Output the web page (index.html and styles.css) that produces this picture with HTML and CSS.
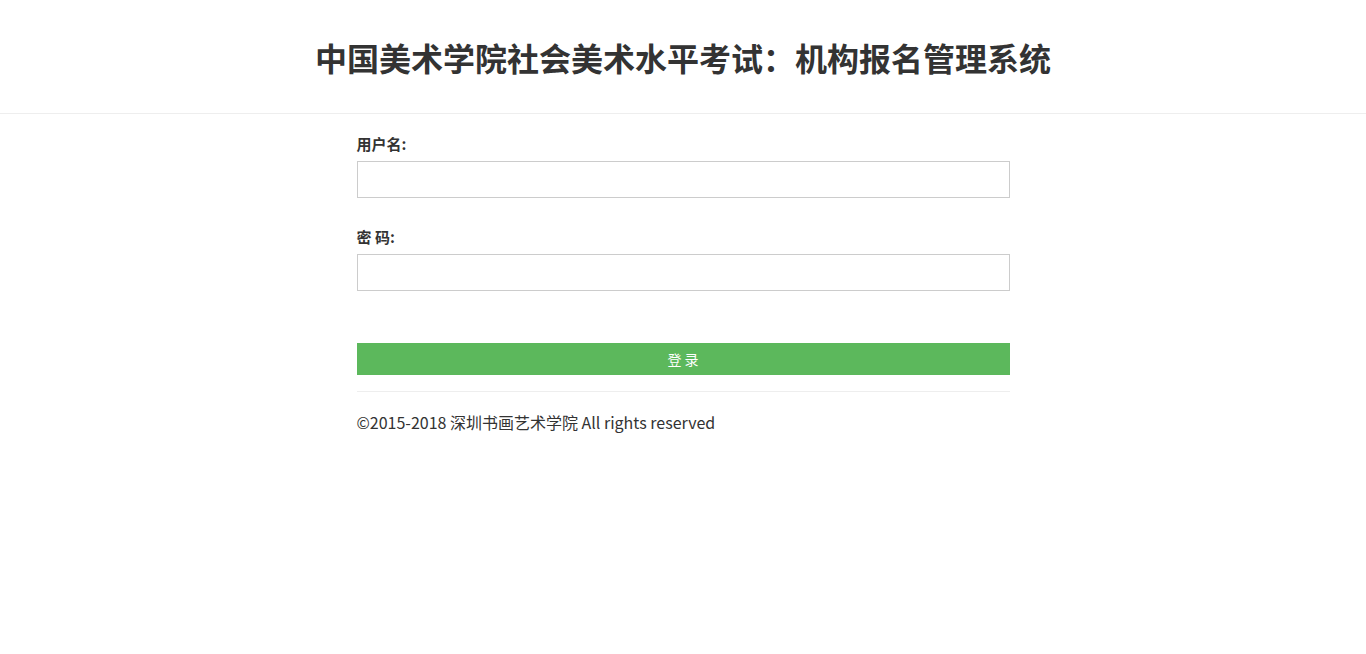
FILE: index.html
```html
<!DOCTYPE html>
<html lang="zh-CN">
<head>
    <meta charset="UTF-8">
    <meta name="viewport" content="width=device-width, initial-scale=1.0">
    <title>机构报名管理系统 - 登录</title>
    <link rel="stylesheet" href="styles.css">
</head>
<body>
    <div class="header">
        <h1 class="site-title">中国美术学院社会美术水平考试：机构报名管理系统</h1>
    </div>

    <div class="login-box">
        <form class="login-form">
            <div class="form-group">
                <label for="username">用户名:</label>
                <input type="text" id="username" class="form-input">
            </div>
            <div class="form-group">
                <label for="password">密 码:</label>
                <input type="password" id="password" class="form-input">
            </div>
            <button type="button" class="login-button">登 录</button>
        </form>
        <div class="footer">
            <p>©2015-2018 深圳书画艺术学院 All rights reserved</p>
        </div>
    </div>
</body>
</html>
```

FILE: styles.css
```css
body {
    margin: 0;
    font-family: "Noto Sans CJK SC", "Noto Sans", sans-serif;
    color: #333;
    background-color: #fff;
}
.header {
    height: 113px;
    border-bottom: 1px solid #eee;
    display: flex;
    align-items: center;
    justify-content: center;
}
.site-title {
    margin: 0;
    font-size: 32px;
    font-weight: 700;
    color: #333;
    line-height: 1;
}
.login-box {
    width: 653px;
    margin: 0 auto;
}
.login-form {
    padding-top: 19px;
}
.form-group {
    margin-bottom: 28px;
}
.form-group label {
    display: block;
    font-size: 15px;
    font-weight: 700;
    line-height: 21px;
    margin-bottom: 7px;
}
.form-input {
    display: block;
    box-sizing: border-box;
    width: 100%;
    height: 37px;
    border: 1px solid #ccc;
    border-radius: 0;
    padding: 6px 10px;
    font-size: 14px;
    outline: none;
}
.login-button {
    display: block;
    width: 100%;
    height: 32px;
    margin-top: 52px;
    border: none;
    border-radius: 0;
    background-color: #5cb85c;
    color: #fff;
    font-family: inherit;
    font-size: 14px;
    cursor: pointer;
}
.form-group + .login-button {
    margin-top: 52px;
}
.form-group:last-of-type {
    margin-bottom: 0;
}
.footer {
    margin-top: 16px;
    border-top: 1px solid #eee;
    padding-top: 18px;
}
.footer p {
    margin: 0;
    font-size: 16px;
    line-height: 24px;
}
```
